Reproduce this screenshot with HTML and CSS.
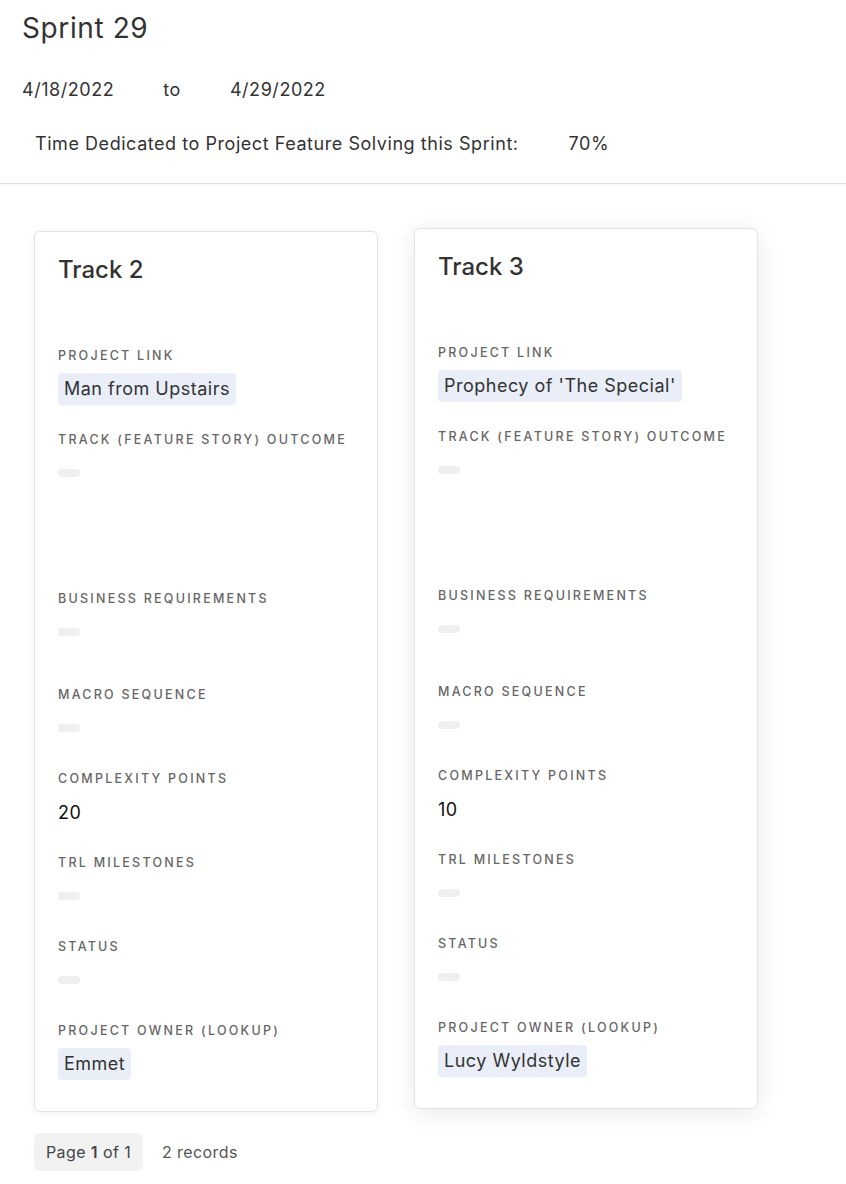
FILE: index.html
```html
<!DOCTYPE html>
<html lang="en">
<head>
<meta charset="utf-8">
<title>Sprint 29</title>
<link rel="stylesheet" href="styles.css">
</head>
<body>
<header class="sprint-header">
  <h1 class="sprint-title">Sprint 29</h1>
  <div class="date-row">
    <span>4/18/2022</span>
    <span>to</span>
    <span>4/29/2022</span>
  </div>
  <div class="time-row">
    <span>Time Dedicated to Project Feature Solving this Sprint:</span>
    <span>70%</span>
  </div>
</header>

<main class="gallery">
  <div class="cards">
    <article class="card">
      <h2 class="card-title">Track 2</h2>
      <div class="field">
        <div class="label">Project Link</div>
        <div class="value"><span class="pill">Man from Upstairs</span></div>
      </div>
      <div class="field">
        <div class="label">Track (Feature Story) Outcome</div>
        <div class="value tall"><span class="empty"></span></div>
      </div>
      <div class="field">
        <div class="label">Business Requirements</div>
        <div class="value medium"><span class="empty"></span></div>
      </div>
      <div class="field">
        <div class="label">Macro Sequence</div>
        <div class="value"><span class="empty"></span></div>
      </div>
      <div class="field">
        <div class="label">Complexity Points</div>
        <div class="value number">20</div>
      </div>
      <div class="field">
        <div class="label">TRL Milestones</div>
        <div class="value"><span class="empty"></span></div>
      </div>
      <div class="field">
        <div class="label">Status</div>
        <div class="value"><span class="empty"></span></div>
      </div>
      <div class="field">
        <div class="label">Project Owner (Lookup)</div>
        <div class="value"><span class="pill">Emmet</span></div>
      </div>
    </article>

    <article class="card card-hover">
      <h2 class="card-title">Track 3</h2>
      <div class="field">
        <div class="label">Project Link</div>
        <div class="value"><span class="pill">Prophecy of 'The Special'</span></div>
      </div>
      <div class="field">
        <div class="label">Track (Feature Story) Outcome</div>
        <div class="value tall"><span class="empty"></span></div>
      </div>
      <div class="field">
        <div class="label">Business Requirements</div>
        <div class="value medium"><span class="empty"></span></div>
      </div>
      <div class="field">
        <div class="label">Macro Sequence</div>
        <div class="value"><span class="empty"></span></div>
      </div>
      <div class="field">
        <div class="label">Complexity Points</div>
        <div class="value number">10</div>
      </div>
      <div class="field">
        <div class="label">TRL Milestones</div>
        <div class="value"><span class="empty"></span></div>
      </div>
      <div class="field">
        <div class="label">Status</div>
        <div class="value"><span class="empty"></span></div>
      </div>
      <div class="field">
        <div class="label">Project Owner (Lookup)</div>
        <div class="value"><span class="pill">Lucy Wyldstyle</span></div>
      </div>
    </article>
  </div>

  <div class="pager">
    <span class="page-box">Page <b>1</b> of 1</span>
    <span class="records">2 records</span>
  </div>
</main>
</body>
</html>
```

FILE: styles.css
```css
* { box-sizing: border-box; }

body {
  margin: 0;
  background: #ffffff;
  color: #333333;
  font-family: Inter, "Noto Sans", "Liberation Sans", sans-serif;
}

.sprint-header {
  padding: 11px 22px 0;
  border-bottom: 1px solid #e2e2e2;
  box-shadow: 0 1px 2px rgba(0, 0, 0, 0.04);
  height: 184px;
}

.sprint-title {
  margin: 0;
  font-size: 28px;
  font-weight: 400;
  line-height: 34px;
  letter-spacing: 0.6px;
  color: #333333;
}

.date-row {
  display: flex;
  gap: 49px;
  margin-top: 34px;
  font-size: 18px;
  line-height: 22px;
  letter-spacing: 0.55px;
}

.time-row {
  display: flex;
  gap: 50px;
  margin-top: 32px;
  padding-left: 13px;
  font-size: 18px;
  line-height: 22px;
  letter-spacing: 0.55px;
}

.gallery {
  padding: 47px 34px 0;
}

.cards {
  display: flex;
  align-items: flex-start;
  gap: 36px;
}

.card {
  width: 344px;
  padding: 22px 23px 31px;
  background: #ffffff;
  border: 1px solid #e3e3e3;
  border-radius: 6px;
  box-shadow: 0 1px 6px rgba(0, 0, 0, 0.06);
}

.card-hover {
  transform: translateY(-3px);
  box-shadow: 0 4px 24px rgba(0, 0, 0, 0.09);
}

.card-title {
  margin: 0 0 62px;
  font-size: 24px;
  font-weight: 500;
  line-height: 32px;
  color: #333333;
}

.field + .field {
  margin-top: 27px;
}

.label {
  font-size: 12.5px;
  line-height: 16px;
  letter-spacing: 2.25px;
  text-transform: uppercase;
  color: #666666;
  font-weight: 500;
}

.value {
  margin-top: 9px;
  height: 32px;
  display: flex;
  align-items: center;
  font-size: 18px;
  letter-spacing: 0.5px;
}

.value.tall {
  height: 107px;
  align-items: flex-start;
  padding-top: 12px;
}

.value.medium {
  height: 44px;
  align-items: flex-start;
  padding-top: 12px;
}

.value.number {
  color: #111111;
}

.pill {
  display: inline-block;
  padding: 0 6px;
  height: 32px;
  line-height: 32px;
  background: #e9eef8;
  border-radius: 4px;
  color: #333333;
  white-space: nowrap;
}

.empty {
  display: block;
  width: 22px;
  height: 8px;
  border-radius: 4px;
  background: #efefef;
}

.pager {
  display: flex;
  align-items: center;
  gap: 19px;
  margin-top: 21px;
  font-size: 16px;
  letter-spacing: 0.4px;
}

.page-box {
  display: inline-block;
  height: 38px;
  line-height: 38px;
  padding: 0 12px;
  background: #f2f2f2;
  border-radius: 6px;
  color: #444444;
}

.page-box b {
  font-weight: 600;
}

.records {
  color: #555555;
}
```
